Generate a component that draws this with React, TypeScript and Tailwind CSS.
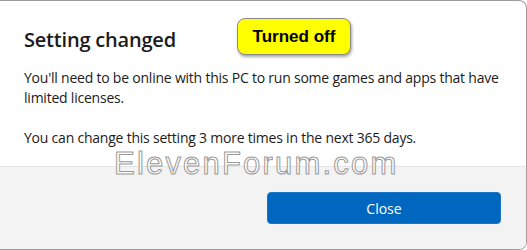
export default function App() {
    return (
        <div className="relative w-[527px] h-[250px] overflow-hidden bg-white">
            <div className="flex flex-col w-full h-full border-t border-r border-b border-[#9e9e9e] rounded-tr-[8px] rounded-br-[8px] overflow-hidden bg-white font-['Open_Sans',sans-serif]">
                <div className="px-6 pt-[25px] h-[165px]">
                    <h1 className="text-[20px] leading-[28px] font-semibold text-[#1b1b1b] tracking-[-0.2px]">
                        Setting changed
                    </h1>
                    <p className="mt-[14px] text-[14px] leading-[20px] text-[#1b1b1b] tracking-[-0.22px]">
                        You'll need to be online with this PC to run some games and apps that have limited licenses.
                    </p>
                    <p className="mt-[20px] text-[14px] leading-[20px] text-[#1b1b1b] tracking-[-0.22px]">
                        You can change this setting 3 more times in the next 365 days.
                    </p>
                </div>
                <div className="flex-1 flex justify-end items-start bg-[#f3f3f3] border-t border-[#e5e5e5] pt-[25px] pr-[25px]">
                    <button className="w-[234px] h-[32px] rounded-[4px] bg-[#0067c0] text-white text-[14px] border border-[#1a73c4]">
                        Close
                    </button>
                </div>
            </div>
            <div className="absolute left-[237px] top-[18px] w-[114px] h-[37px] flex items-center justify-center rounded-[8px] bg-[#ffff00] border border-[#8a8a8a] shadow-[1px_2px_3px_rgba(0,0,0,0.35)] font-['Liberation_Sans',Arial,sans-serif] font-bold text-[17px] text-black">
                Turned off
            </div>
            <div className="absolute left-[114px] top-[144px] text-[31px] leading-[40px] font-['Liberation_Sans',Arial,sans-serif] text-white [-webkit-text-stroke:1px_#9a9a9a] tracking-[2.2px]">
                ElevenForum.com
            </div>
        </div>
    )
}
